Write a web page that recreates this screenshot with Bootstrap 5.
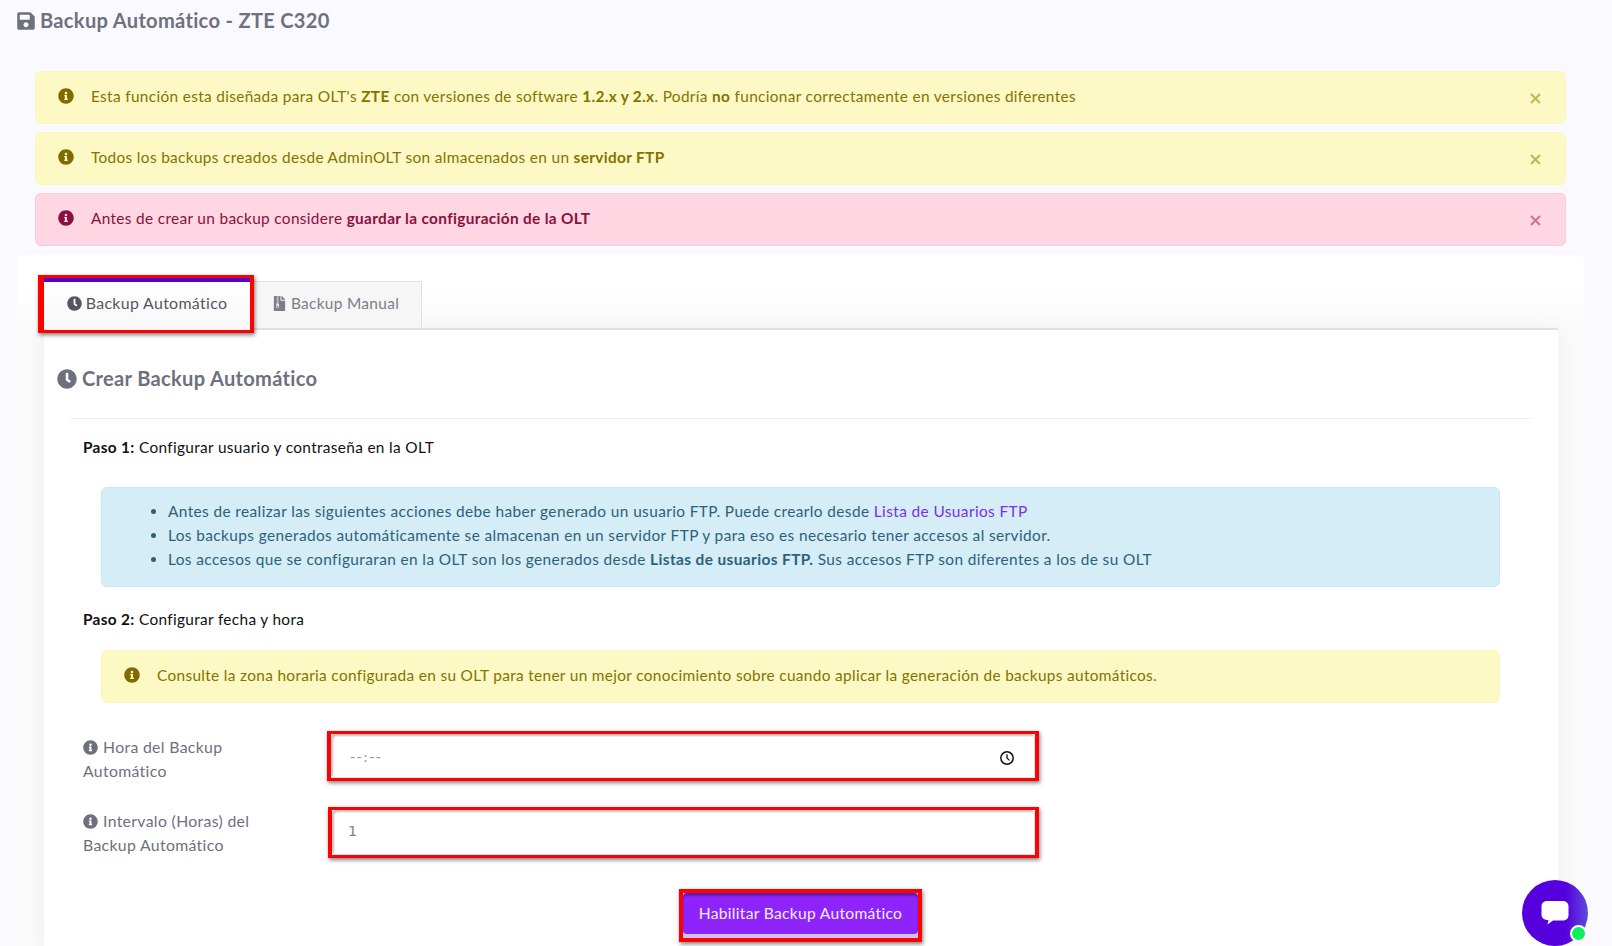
<!DOCTYPE html>
<html lang="es">
<head>
<meta charset="utf-8">
<title>Backup Automático - ZTE C320</title>
<link rel="stylesheet" href="https://cdn.jsdelivr.net/npm/bootstrap@5.3.0/dist/css/bootstrap.min.css">
<style>
html,body{height:946px;overflow:hidden}
body{background:#f9f9ff;font-family:Lato,"Open Sans",sans-serif;font-size:15.4px;letter-spacing:.33px;line-height:24px;color:#6e707e}
.ico{display:inline-block;fill:currentColor;flex:none}
.page-title{margin:0;padding:8px 0 0 17px;font-size:20.1px;letter-spacing:.3px;line-height:24px;font-weight:700;color:#6e707e;height:71px}
.page-title .ico{width:18px;height:20px;vertical-align:-3px;margin-right:5px}
.alert-stack{padding:0 46px 0 35px}
.note{display:flex;align-items:center;margin:0 0 8.4px;padding:12.4px 20px 14.2px 22px;border-radius:6px;border:1px solid;position:relative}
.note .ico{width:16px;height:16px;margin-right:17px;margin-top:-1px}
.note-y{background:#fcf9c5;border-color:#fbf6b8;color:#857300}
.note-y .ico{color:#7f6b00}
.note-r{background:#ffd6e2;border-color:#fdc8d7;color:#8a1040}
.note-r .ico{color:#8a1040}
.note .btn-close{position:absolute;right:24px;top:21px;width:11px;height:11px;padding:0;background:none;opacity:1;display:flex}
.note .btn-close svg{width:11px;height:11px}
.note-y .btn-close{color:#c4b358}
.note-r .btn-close{color:#c9739a}
.panel{margin:9px 28px 0 17px;background:#fff;border-radius:6px;padding:20px 26px 0 27px;height:700px;overflow:hidden;background-image:linear-gradient(#fff 30px,#fafafb 75px)}
.tabs-row{display:flex;align-items:flex-end;border-bottom:2px solid #e3e6ef;flex-wrap:nowrap;padding:0}
.hl{border:solid #f00;border-width:3px 4px;box-shadow:1px 2px 4px rgba(0,0,0,.5);background:#fff;position:relative}
.tab-hl{margin:0 0 -5px -6px;border-width:3px 4px 3px 6px;z-index:2;width:216px}
.tab-on{display:block;border-top:4px solid #5500cf;height:52px;background:linear-gradient(#fff,#f7f7f7);color:#55565f;text-align:center;padding:9px 0 0;text-decoration:none;font-size:15.9px}
.tab-on .ico,.tab-off .ico{width:15px;height:15px;vertical-align:-2px;margin-right:4px}
.tab-off{display:block;width:168px;height:47px;background:#f6f6f6;border:1px solid #dfe0e6;border-width:1px 1px 0 0;color:#7b7d8a;text-align:center;padding:9px 4px 0 0;text-decoration:none}
.pane{background:#fff;box-shadow:0 0 22px rgba(0,0,0,.05);height:620px;padding:36px 0 0}
.pane-h{margin:0 0 28px 13px;font-size:20.1px;letter-spacing:.3px;line-height:24px;font-weight:700;color:#6e707e}
.pane-h .ico{width:20px;height:20px;vertical-align:-3px;margin-right:5px}
.rule{margin:0 26px 16px;border:0;border-top:1px solid #eef0f4;opacity:1}
.step{margin:0 0 28px 39px;color:#111}
.step b{font-weight:700}
.step-2{margin-bottom:19px}
.box{margin:0 58px 20px 57px;border-radius:6px;border:1px solid #c6e7f3;background:#d4edf7;color:#2e6179;padding:11px 0 15px 47px;letter-spacing:.4px}
.box ul{margin:0;padding:0 0 0 19px}
.box a{color:#7b2ff0;text-decoration:none}
.box b{font-weight:700}
.note-in{margin:0 58px 32px 57px;padding:12.5px 20px 14.5px 22px}
.form-line{display:flex;margin:0}
.form-lbl{padding:0 0 0 39px;flex:none;box-sizing:border-box;width:283px;color:#6e707e;font-size:15.8px}
.form-lbl .ico{width:15px;height:15px;vertical-align:-2px;margin-right:5px}
.form-lbl div{width:190px}
.inp-hl{width:712px;height:50px;border-width:3px 4px;margin-top:-4px}
.inp-hl .form-control{height:44px;border-radius:4px;border:1px solid #e4e2ef;border-width:0 1px 1px 0;box-shadow:inset 2px 2px 2px rgba(0,0,0,.25);font-family:"DejaVu Sans",sans-serif;font-size:14.4px;color:#8b8088;padding:0 0 2px 16px;background:#fff}
.inp-hl .inp-time{padding:3px 0 0 19px}
.inp-hl .form-control::placeholder{color:#99969f;letter-spacing:1.3px}
.clock-ind{position:absolute;right:20px;top:16px;width:16px;height:16px}
.line-2{margin-top:26px}
.line-2 .inp-hl{height:51px;margin:-2px 0 0 1px;width:711px}
.line-2 .form-control{height:45px}
.btn-row{display:flex;justify-content:center;margin-top:31px;padding-right:1px}
.btn-hl{width:243px;height:53px;border-width:4px;background:#cfc2f2}
.go-btn{display:block;width:100%;height:41px;border:0;border-radius:4px;background:#8e24fb;color:#f4edff;font-size:15.6px;letter-spacing:.3px;padding:2px 0 0;box-shadow:inset 0 3px 2px rgba(0,0,0,.3)}
.go-btn:hover,.go-btn:focus{background:#8e24fb;color:#f4edff}
.chat{position:fixed;left:1522px;top:880px;width:66px;height:66px;border-radius:50%;background:linear-gradient(90deg,#5500dd 66%,#5f4bdd 100%);display:flex;align-items:center;justify-content:center}
.chat svg{width:30px;height:30px}
.chat i{position:absolute;left:48px;top:45px;width:17px;height:17px;border-radius:50%;background:#0cf05c;border:2px solid #fff}
</style>
</head>
<body>
<svg width="0" height="0" class="d-none" aria-hidden="true">
<symbol id="i-info" viewBox="0 0 512 512"><path d="M256 8C119.043 8 8 119.083 8 256c0 136.997 111.043 248 248 248s248-111.003 248-248C504 119.083 392.957 8 256 8zm0 110c23.196 0 42 18.804 42 42s-18.804 42-42 42-42-18.804-42-42 18.804-42 42-42zm56 254c0 6.627-5.373 12-12 12h-88c-6.627 0-12-5.373-12-12v-24c0-6.627 5.373-12 12-12h12v-64h-12c-6.627 0-12-5.373-12-12v-24c0-6.627 5.373-12 12-12h64c6.627 0 12 5.373 12 12v100h12c6.627 0 12 5.373 12 12v24z"/></symbol>
<symbol id="i-clock" viewBox="0 0 512 512"><path d="M256,8C119,8,8,119,8,256S119,504,256,504,504,393,504,256,393,8,256,8Zm92.49,313h0l-20,25a16,16,0,0,1-22.49,2.5h0l-67-49.72a40,40,0,0,1-15-31.23V112a16,16,0,0,1,16-16h32a16,16,0,0,1,16,16V256l58,42.5A16,16,0,0,1,348.49,321Z"/></symbol>
<symbol id="i-save" viewBox="0 0 448 512"><path d="M433.941 129.941l-83.882-83.882A48 48 0 0 0 316.118 32H48C21.49 32 0 53.49 0 80v352c0 26.51 21.49 48 48 48h352c26.51 0 48-21.49 48-48V163.882a48 48 0 0 0-14.059-33.941zM224 416c-35.346 0-64-28.654-64-64 0-35.346 28.654-64 64-64s64 28.654 64 64c0 35.346-28.654 64-64 64zm96-304.52V212c0 6.627-5.373 12-12 12H76c-6.627 0-12-5.373-12-12V108c0-6.627 5.373-12 12-12h228.52c3.183 0 6.235 1.264 8.485 3.515l3.48 3.48A11.996 11.996 0 0 1 320 111.48z"/></symbol>
<symbol id="i-zip" viewBox="0 0 384 512"><path d="M377 105L279.1 7c-4.5-4.5-10.6-7-17-7H256v128h128v-6.1c0-6.3-2.5-12.4-7-16.9zM128.4 336c-17.9 0-32.4 12.1-32.4 27 0 15 14.6 27 32.5 27s32.4-12.1 32.4-27-14.6-27-32.5-27zM224 136V0h-63.6v32h-32V0H24C10.7 0 0 10.7 0 24v464c0 13.3 10.7 24 24 24h336c13.3 0 24-10.7 24-24V160H248c-13.2 0-24-10.8-24-24zM95.9 32h32v32h-32zm32.3 384c-33.2 0-58-30.4-51.4-62.9L96.4 256v-32h32v-32h-32v-32h32v-32h-32V96h32V64h32v32h-32v32h32v32h-32v32h32v32h-32v32h22.1c5.7 0 10.7 4.1 11.8 9.7l17.3 87.7c6.4 32.4-18.4 62.6-51.4 62.6z"/></symbol>
<symbol id="i-x" viewBox="0 0 11 11"><path d="M1 1l9 9M10 1l-9 9" fill="none" stroke="currentColor" stroke-width="2"/></symbol>
</svg>

<h1 class="page-title"><svg class="ico"><use href="#i-save"/></svg>Backup Automático - ZTE C320</h1>

<div class="alert-stack">
  <div class="note note-y" role="alert"><svg class="ico"><use href="#i-info"/></svg><span>Esta función esta diseñada para OLT's <b>ZTE</b> con versiones de software <b>1.2.x y 2.x</b>. Podría <b>no</b> funcionar correctamente en versiones diferentes</span><button type="button" class="btn-close" aria-label="Close"><svg><use href="#i-x"/></svg></button></div>
  <div class="note note-y" role="alert"><svg class="ico"><use href="#i-info"/></svg><span>Todos los backups creados desde AdminOLT son almacenados en un <b>servidor FTP</b></span><button type="button" class="btn-close" aria-label="Close"><svg><use href="#i-x"/></svg></button></div>
  <div class="note note-r mb-0" role="alert"><svg class="ico"><use href="#i-info"/></svg><span>Antes de crear un backup considere <b>guardar la configuración de la OLT</b></span><button type="button" class="btn-close" aria-label="Close"><svg><use href="#i-x"/></svg></button></div>
</div>

<div class="panel">
  <div class="tabs-row">
    <div class="hl tab-hl"><a class="tab-on" href="#"><svg class="ico"><use href="#i-clock"/></svg>Backup Automático</a></div>
    <a class="tab-off" href="#"><svg class="ico"><use href="#i-zip"/></svg>Backup Manual</a>
  </div>
  <div class="pane">
    <h2 class="pane-h"><svg class="ico"><use href="#i-clock"/></svg>Crear Backup Automático</h2>
    <hr class="rule">
    <p class="step"><b>Paso 1:</b> Configurar usuario y contraseña en la OLT</p>
    <div class="box">
      <ul>
        <li>Antes de realizar las siguientes acciones debe haber generado un usuario FTP. Puede crearlo desde <a href="#">Lista de Usuarios FTP</a></li>
        <li>Los backups generados automáticamente se almacenan en un servidor FTP y para eso es necesario tener accesos al servidor.</li>
        <li>Los accesos que se configuraran en la OLT son los generados desde <b>Listas de usuarios FTP.</b> Sus accesos FTP son diferentes a los de su OLT</li>
      </ul>
    </div>
    <p class="step step-2"><b>Paso 2:</b> Configurar fecha y hora</p>
    <div class="note note-y note-in" role="alert"><svg class="ico"><use href="#i-info"/></svg><span>Consulte la zona horaria configurada en su OLT para tener un mejor conocimiento sobre cuando aplicar la generación de backups automáticos.</span></div>
    <div class="form-line">
      <label class="form-lbl"><div><svg class="ico"><use href="#i-info"/></svg>Hora del Backup Automático</div></label>
      <div class="hl inp-hl"><input type="text" class="form-control inp-time" placeholder="--:--" aria-label="Hora">
        <svg class="clock-ind" viewBox="0 0 16 16" fill="none" stroke="#111" stroke-width="1.5"><circle cx="8" cy="8" r="6.2"/><path d="M8 4.2V8l2.4 2.4" stroke-width="1.3"/></svg>
      </div>
    </div>
    <div class="form-line line-2">
      <label class="form-lbl"><div><svg class="ico"><use href="#i-info"/></svg>Intervalo (Horas) del Backup Automático</div></label>
      <div class="hl inp-hl"><input type="number" class="form-control" value="1" aria-label="Intervalo"></div>
    </div>
    <div class="btn-row"><div class="hl btn-hl"><button type="button" class="btn go-btn">Habilitar Backup Automático</button></div></div>
  </div>
</div>

<div class="chat"><svg viewBox="0 0 30 30"><path fill="#fff" d="M7 3h16c3.300 0 5.500 2.400 5.500 5.500v8.500c0 3.300-2.200 5.500-5.500 5.500H13l-5.500 4 1-4.200C4.500 22 1.500 20 1.500 17V8.500C1.500 5.400 3.700 3 7 3z"/></svg><i></i></div>
</body>
</html>
